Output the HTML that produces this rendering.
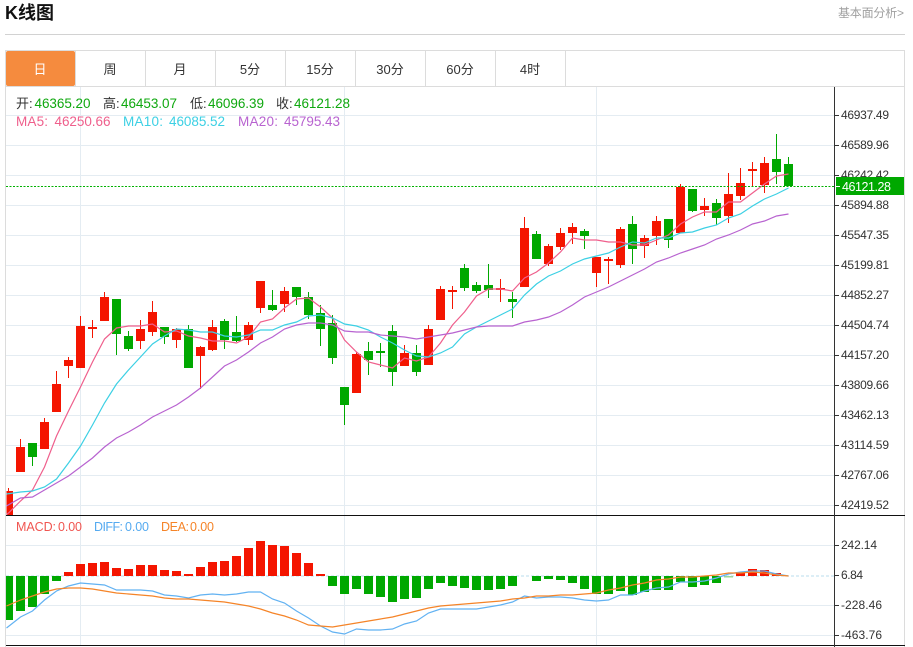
<!DOCTYPE html>
<html><head><meta charset="utf-8"><style>
html,body{margin:0;padding:0;background:#fff;width:913px;height:647px;overflow:hidden}
svg{display:block;font-family:"Liberation Sans","Noto Sans CJK SC",sans-serif}
</style></head><body>
<svg width="913" height="647" viewBox="0 0 913 647">
<defs><clipPath id="k"><rect x="6" y="87" width="828" height="428"/></clipPath></defs>
<text x="5" y="19" font-size="18" font-weight="bold" fill="#111">K线图</text>
<text x="838" y="17" font-size="12" fill="#a0a0a0" textLength="66">基本面分析&gt;</text>
<path d="M5 34.5H905" stroke="#d2d2d2"/>
<path d="M5.5 51V647M904.5 51V647M5 50.5H905" stroke="#dcdcdc" fill="none"/>
<path d="M6 86.5H904" stroke="#dcdcdc"/>
<rect x="6" y="51" width="69" height="35" rx="2" fill="#f58b3e"/>
<path d="M75.5 51V86M145.5 51V86M215.5 51V86M285.5 51V86M355.5 51V86M425.5 51V86M495.5 51V86M565.5 51V86" stroke="#dcdcdc"/>
<g font-size="13" text-anchor="middle" fill="#333">
<text x="40" y="74" fill="#fff">日</text><text x="110" y="74">周</text><text x="180" y="74">月</text><text x="250" y="74">5分</text><text x="320" y="74">15分</text><text x="390" y="74">30分</text><text x="460" y="74">60分</text><text x="530" y="74">4时</text>
</g>
<path d="M6 115.5H834M6 145.5H834M6 175.5H834M6 205.5H834M6 235.5H834M6 265.5H834M6 295.5H834M6 325.5H834M6 355.5H834M6 385.5H834M6 415.5H834M6 445.5H834M6 475.5H834M6 505.5H834M6 545.5H834M6 605.5H834M6 635.5H834M80.5 87V645M344.5 87V645M596.5 87V645" stroke="#e4ecf2" fill="none"/>
<g clip-path="url(#k)" transform="translate(.5 0)" fill="none">
<path stroke="#f41500" stroke-width="1" transform="translate(0 0)" d="M8 488V516M20 439V472M44 418V449M56 371V412M68 357V378M80 316V368M92 320V338M104 292V321M140 320V349M152 301V336M176 328V348M200 346V389M212 320V351M248 322V345M260 281V313M284 287V312M356 352V393M404 345V366M428 325V365M440 286V320M452 286V309M500 279V302M524 217V287M548 244V266M560 228V250M572 223V244M596 257V287M608 257V284M620 227V268M644 235V258M656 216V245M680 184V233M704 198V216M728 173V223M740 168V200M752 162V186M764 157V193"/>
<path stroke="#00a800" stroke-width="1" d="M32 443V466M116 299V355M128 331V351M164 327V344M188 325V368M224 319V349M236 316V342M272 290V311M296 287V305M308 292V319M320 305V346M332 315V364M344 387V425M368 342V375M380 343V367M392 325V386M416 345V376M464 264V291M476 282V293M488 264V298M512 292V318M536 231V259M584 229V249M632 216V264M668 219V248M692 189V212M716 199V225M776 134V184M788 157V186"/>
<path stroke="#f41500" stroke-width="9" d="M8 491V516M20 447V472M44 422V449M56 384V412M68 360V366M80 326V368M92 327V329M104 297V321M140 329V341M152 312V332M176 329V340M200 347V356M212 327V350M248 325V340M260 281V308M284 291V304M356 354V393M404 353V366M428 329V365M440 289V320M452 290V292M500 288V290M524 228V287M548 246V264M560 233V247M572 227V233M596 257V273M608 259V261M620 229V265M644 238V246M656 221V236M680 187V233M704 206V210M728 194V216M740 183V196M752 169V171M764 163V185"/>
<path stroke="#00a800" stroke-width="9" d="M32 443V457M116 299V334M128 336V349M164 327V337M188 329V368M224 321V340M236 332V341M272 305V310M296 287V297M308 297V315M320 313V329M332 323V358M344 387V405M368 351V360M380 351V353M392 331V372M416 353V372M464 268V288M476 285V291M488 285V290M512 299V302M536 234V259M584 231V236M632 224V249M668 219V240M692 189V211M716 203V218M776 159V172M788 164V186"/>
<polyline stroke="#ef5f8c" stroke-width="1.2" points="4,516 8,513 20,501 32,490 44,467 56,436 68,411 80,387 92,362 104,339 116,328 128,326 140,326 152,324 164,332 176,331 188,336 200,338 212,341 224,341 236,343 248,337 260,322 272,319 284,308 296,299 308,298 320,307 332,318 344,340 356,352 368,362 380,365 392,368 404,358 416,361 428,357 440,343 452,325 464,312 476,296 488,289 500,289 512,291 524,278 536,272 548,263 560,252 572,238 584,240 596,240 608,242 620,242 632,245 644,245 656,240 668,235 680,224 692,217 704,212 716,212 728,202 740,202 752,193 764,184 776,176 788,174"/>
<polyline stroke="#3cd0e4" stroke-width="1.2" points="6,494 20,492 32,491 44,487 56,479 68,463 80,446 92,425 104,403 116,384 128,370 140,357 152,344 164,336 176,329 188,330 200,332 212,332 224,336 236,337 248,335 260,330 272,330 284,325 296,322 308,316 320,315 332,318 344,324 356,326 368,330 380,337 392,343 404,350 416,356 428,357 440,353 452,347 464,334 476,327 488,321 500,315 512,309 524,295 536,284 548,276 560,271 572,264 584,259 596,256 608,253 620,247 632,242 644,243 656,238 668,238 680,233 692,232 704,228 716,225 728,218 740,214 752,206 764,199 776,194 788,188"/>
<polyline stroke="#b863d0" stroke-width="1.2" points="6,506 20,498 32,497 44,490 56,483 68,476 80,467 92,458 104,447 116,438 128,432 140,425 152,417 164,411 176,405 188,397 200,388 212,377 224,366 236,360 248,352 260,343 272,337 284,329 296,325 308,323 320,323 332,325 344,331 356,332 368,332 380,335 392,336 404,337 416,339 428,337 440,335 452,333 464,330 476,327 488,326 500,326 512,326 524,322 536,320 548,317 560,312 572,305 584,297 596,292 608,287 620,281 632,275 644,269 656,262 668,258 680,253 692,249 704,245 716,239 728,235 740,230 752,224 764,221 776,216 788,214"/>
</g>
<path d="M6 186.5H834" stroke="#00b000" stroke-dasharray="2 1.5"/>
<path d="M6 576H834" stroke="#b8dcee" stroke-dasharray="3 2"/>
<g transform="translate(.5 0)" fill="none">
<path stroke="#f41500" stroke-width="9" d="M68 576V572M80 576V564M92 576V563M104 576V562M116 576V568M128 576V569M140 576V565M152 576V565M164 576V570M176 576V571M188 576V574M200 576V567M212 576V562M224 576V561M236 576V556M248 576V548M260 576V541M272 576V545M284 576V546M296 576V553M308 576V563M320 576V574M740 576V572M752 576V569M764 576V570M776 576V573"/>
<path stroke="#00a800" stroke-width="7" d="M9 576V620"/>
<path stroke="#00a800" stroke-width="9" d="M20 576V611M32 576V607M44 576V594M56 576V581M332 576V586M344 576V594M356 576V589M368 576V594M380 576V597M392 576V602M404 576V599M416 576V598M428 576V589M440 576V583M452 576V586M464 576V588M476 576V590M488 576V590M500 576V589M512 576V586M536 576V581M548 576V579M560 576V580M572 576V583M584 576V589M596 576V594M608 576V594M620 576V591M632 576V595M644 576V592M656 576V590M668 576V590M680 576V582M692 576V587M704 576V585M716 576V583"/>
<path stroke="#9ad79a" stroke-width="9" d="M728 576V577.5"/>
<polyline stroke="#62b2f2" stroke-width="1.2" points="6,628 20,617 32,611 44,600 56,591 68,586 80,583 92,584 104,585 116,590 128,590 140,590 152,591 164,595 176,596 188,598 200,595 212,594 224,595 236,594 248,592 260,592 272,599 284,603 296,611 308,618 320,626 332,632 344,634 356,629 368,630 380,630 392,629 404,624 416,621 428,613 440,609 452,609 464,609 476,609 488,607 500,605 512,602 524,596 536,598 548,597 560,597 572,598 584,600 596,601 608,600 620,595 632,595 644,591 656,588 668,587 680,582 692,582 704,581 716,578 728,574 740,572 752,571 764,571 776,574 788,576"/>
<polyline stroke="#f58428" stroke-width="1.2" points="6,606 20,600 32,596 44,592 56,589 68,588 80,588 92,589 104,591 116,593 128,594 140,595 152,596 164,598 176,599 188,599 200,600 212,601 224,602 236,604 248,606 260,609 272,613 284,616 296,620 308,625 320,626 332,627 344,625 356,623 368,621 380,619 392,617 404,614 416,611 428,608 440,606 452,605 464,604 476,603 488,602 500,601 512,599 524,598 536,596 548,596 560,595 572,595 584,594 596,593 608,590 620,588 632,585 644,583 656,580 668,579 680,577 692,577 704,576 716,575 728,573 740,573 752,572 764,573 776,575 788,576"/>
</g>
<path d="M6 515.5H905M6 645.5H905" stroke="#111"/>
<path d="M834.5 87V647" stroke="#333"/>
<path d="M835 115.5h4M835 145.5h4M835 175.5h4M835 205.5h4M835 235.5h4M835 265.5h4M835 295.5h4M835 325.5h4M835 355.5h4M835 385.5h4M835 415.5h4M835 445.5h4M835 475.5h4M835 505.5h4M835 545.5h4M835 575.5h4M835 605.5h4M835 635.5h4" stroke="#333"/>
<g font-size="12" fill="#333">
<text x="841" y="119" textLength="48">46937.49</text>
<text x="841" y="149" textLength="48">46589.96</text>
<text x="841" y="179" textLength="48">46242.42</text>
<text x="841" y="209" textLength="48">45894.88</text>
<text x="841" y="239" textLength="48">45547.35</text>
<text x="841" y="269" textLength="48">45199.81</text>
<text x="841" y="299" textLength="48">44852.27</text>
<text x="841" y="329" textLength="48">44504.74</text>
<text x="841" y="359" textLength="48">44157.20</text>
<text x="841" y="389" textLength="48">43809.66</text>
<text x="841" y="419" textLength="48">43462.13</text>
<text x="841" y="449" textLength="48">43114.59</text>
<text x="841" y="479" textLength="48">42767.06</text>
<text x="841" y="509" textLength="48">42419.52</text>
<text x="841" y="549" textLength="36">242.14</text>
<text x="841" y="579" textLength="22">6.84</text>
<text x="841" y="609" textLength="41">-228.46</text>
<text x="841" y="639" textLength="41">-463.76</text>
</g>
<rect x="836" y="177" width="68" height="18" fill="#00a800"/>
<path d="M836 186.5h4" stroke="#fff"/>
<text x="842" y="191" font-size="12.5" fill="#fff" textLength="49">46121.28</text>
<g font-size="13.5" fill="#0fa80f">
<text x="16" y="108" fill="#333" font-size="13">开:</text><text x="34.5" y="108" textLength="56">46365.20</text>
<text x="103" y="108" fill="#333" font-size="13">高:</text><text x="121" y="108" textLength="56">46453.07</text>
<text x="190" y="108" fill="#333" font-size="13">低:</text><text x="208" y="108" textLength="56">46096.39</text>
<text x="276" y="108" fill="#333" font-size="13">收:</text><text x="294" y="108" textLength="56">46121.28</text>
<g fill="#ef5f8c"><text x="16" y="126" textLength="32">MA5:</text><text x="54.5" y="126" textLength="56">46250.66</text></g>
<g fill="#3cd0e4"><text x="123" y="126" textLength="40">MA10:</text><text x="169" y="126" textLength="56">46085.52</text></g>
<g fill="#b863d0"><text x="238" y="126" textLength="40">MA20:</text><text x="284" y="126" textLength="56">45795.43</text></g>
</g>
<g font-size="12.5">
<g fill="#f05550"><text x="16" y="531" textLength="40">MACD:</text><text x="58" y="531" textLength="24">0.00</text></g>
<g fill="#55aaf0"><text x="94" y="531" textLength="29">DIFF:</text><text x="125" y="531" textLength="24">0.00</text></g>
<g fill="#f58428"><text x="161" y="531" textLength="28">DEA:</text><text x="190" y="531" textLength="24">0.00</text></g>
</g>
</svg>
</body></html>
